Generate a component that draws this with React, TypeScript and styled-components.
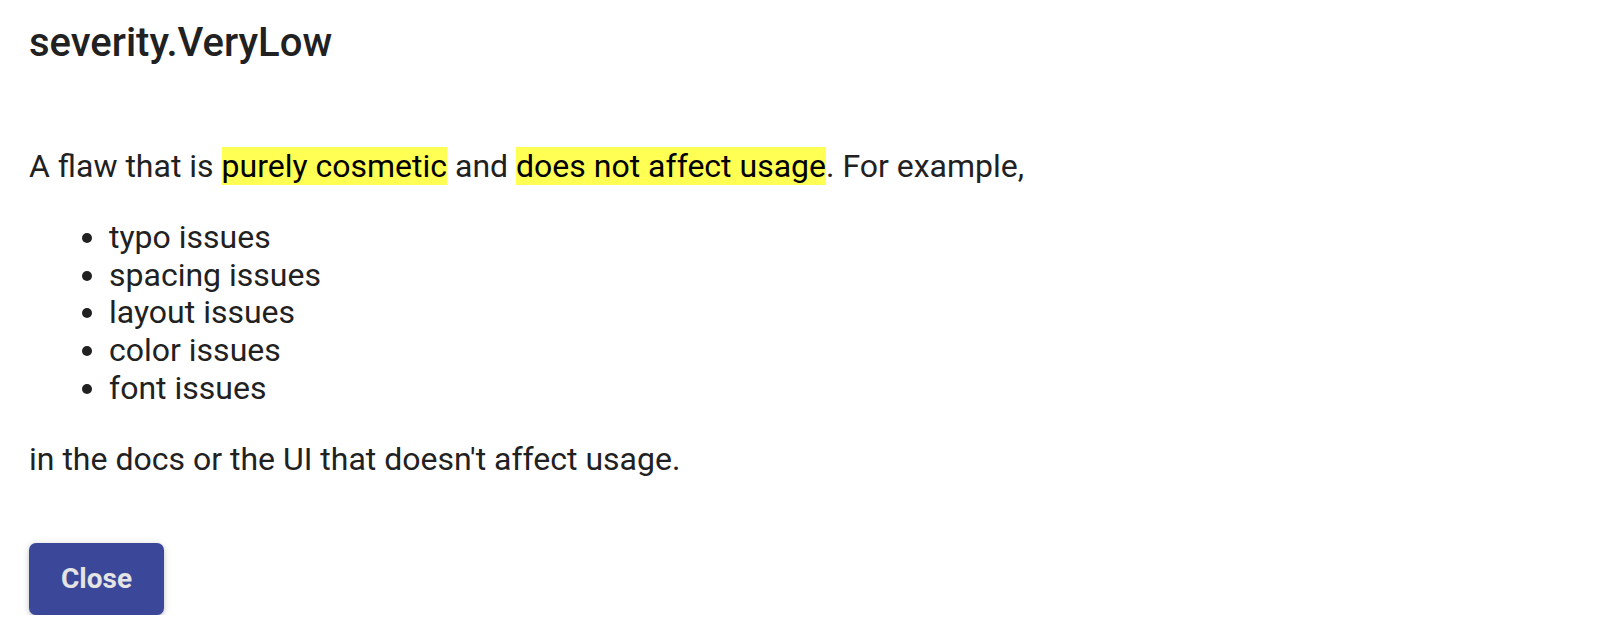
import React from "react";
import styled, { createGlobalStyle } from "styled-components";

const Global = createGlobalStyle`
  html, body { margin: 0; padding: 0; background: #ffffff; }
  body { font-family: Roboto, "Noto Sans", Arial, sans-serif; color: rgba(0,0,0,0.87); }
`;

const Page = styled.div`
  display: flex;
  flex-direction: column;
  align-items: flex-start;
  padding: 19px 29px 0 29px;
`;

const Title = styled.h2`
  margin: 0;
  font-size: 40px;
  line-height: 48px;
  font-weight: 500;
  color: #212121;
`;

const Body = styled.div`
  display: flex;
  flex-direction: column;
  margin-top: 81px;
  font-size: 32px;
  line-height: 37.8px;
  color: #212121;
`;

const Para = styled.p`
  margin: 0;
`;

const Mark = styled.mark`
  background: #ffff54;
  color: #000;
`;

const List = styled.ul`
  margin: 33px 0;
  padding-left: 80px;
  list-style: disc;
`;

const Item = styled.li``;

const Button = styled.button`
  margin-top: 64px;
  width: 135px;
  height: 72px;
  border: none;
  border-radius: 7px;
  background: #3b4799;
  color: #e4e4e4;
  font-family: Roboto, Arial, sans-serif;
  font-size: 28px;
  font-weight: 700;
  box-shadow: 0 3px 2px -2px rgba(0,0,0,0.2), 0 2px 4px 0 rgba(0,0,0,0.14), 0 1px 8px 0 rgba(0,0,0,0.12);
  cursor: pointer;
`;

export default function App() {
  const items = ["typo issues", "spacing issues", "layout issues", "color issues", "font issues"];
  return (
    <>
      <Global />
      <Page>
        <Title>severity.VeryLow</Title>
        <Body>
          <Para>
            A flaw that is <Mark>purely cosmetic</Mark> and <Mark>does not affect usage</Mark>. For example,
          </Para>
          <List>
            {items.map((t) => (
              <Item key={t}>{t}</Item>
            ))}
          </List>
          <Para>in the docs or the UI that doesn't affect usage.</Para>
        </Body>
        <Button>Close</Button>
      </Page>
    </>
  );
}
